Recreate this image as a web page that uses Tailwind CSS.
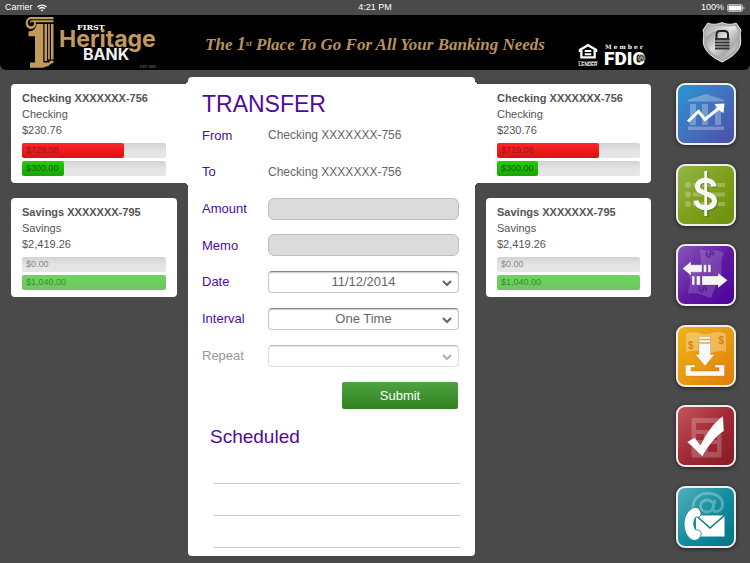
<!DOCTYPE html>
<html lang="en">
<head>
<meta charset="utf-8">
<meta name="viewport" content="width=device-width, initial-scale=1">
<title>First Heritage Bank - Transfer</title>
<script src="https://cdn.jsdelivr.net/npm/@tailwindcss/browser@4"></script>
</head>
<body class="min-h-screen bg-[#4a4a4a] font-['Liberation_Sans',Arial,sans-serif] text-[#555]">

<!-- Status bar -->
<div class="grid h-[15px] grid-cols-3 items-center px-[5px] text-[9px] leading-[15px] font-medium text-white">
  <div class="flex items-center gap-1">
    <span>Carrier</span>
    <svg class="h-2 w-[10px]" viewBox="0 0 20 16" fill="none" stroke="#fff" stroke-width="2.6" aria-hidden="true"><path d="M1 6C6 1 14 1 19 6M4.500 9.500C8 6.300 12 6.300 15.500 9.500"/><path d="M7.200 12C9 10.500 11 10.500 12.800 12L10 15Z" fill="#fff" stroke="none"/></svg>
  </div>
  <div class="text-center">4:21 PM</div>
  <div class="flex items-center justify-end gap-[3px]">
    <span>100%</span>
    <svg class="h-2 w-[18px]" viewBox="0 0 18 8" aria-hidden="true"><rect x=".5" y=".5" width="15" height="7" rx="1.500" fill="none" stroke="#ddd" stroke-width=".7"/><rect x="1.500" y="1.500" width="13" height="5" rx=".6" fill="#fff"/><path d="M16.500 2.500c1.300.4 1.300 2.600 0 3z" fill="#ddd"/></svg>
  </div>
</div>

<!-- Brand header -->
<header class="flex h-[55px] items-start rounded-b-md bg-black pr-2 pl-[24px]">
  <svg class="h-[55px] w-[148px] shrink-0" viewBox="24 15 148 55" role="img" aria-label="First Heritage Bank">
    <g fill="#c29a5b">
      <path d="M31 17H53.500V19.300H31.500C28.500 19.300 27.800 21 27.800 22.800C27.800 25 29.300 26.300 31 26.300C33 26.300 34 25 34 23.600C34 22.300 33 21.700 32 21.700C31 21.700 30.500 22.500 30.800 23.400C29.500 22.800 29.800 20.300 32.300 20.300H53.500V22.300H35.500C37 25 35 29 31 29C28 29 25.700 26.500 25.700 23C25.700 19.500 28 17 31 17Z"/>
      <path d="M36.500 24H43.300V62.500H49.500V60.800H53.500V63C51 63.200 50 64.500 49 65.500C47.500 67 45.500 66 43 67.800H30V62.500H35V36.200H28.500V31.500C33 31.500 36.500 28.500 36.500 24Z"/>
      <path d="M44.500 24H47V61H44.500ZM48.100 24H49.800V59.500H48.100ZM51 24H53.500V59.500H51Z"/>
    </g>
    <text x="77" y="30" font-family="'DejaVu Serif',serif" font-weight="bold" font-size="8" fill="#fff">FIRST</text>
    <text x="59" y="47" font-family="Inter,'Open Sans',sans-serif" font-weight="700" font-size="23" fill="#c29a5b">Heritage</text>
    <text x="83" y="60" font-family="Inter,'Open Sans',sans-serif" font-weight="700" font-size="16" fill="#eee">BANK</text>
    <text x="140" y="68" font-family="'Liberation Serif',serif" font-size="4" fill="#a98750">EST 1882</text>
  </svg>
  <p class="flex-1 pt-[19px] text-center font-['Liberation_Serif',Georgia,serif] text-[17px] leading-[20px] font-bold whitespace-nowrap text-[#ba935b] italic">The <span class="text-[18px]">1</span><sup class="text-[9px]">st</sup> Place To Go For All Your Banking Needs</p>
  <div class="flex shrink-0 items-start gap-[6px]">
    <svg class="mt-7 h-6 w-5" viewBox="0 0 20 24" role="img" aria-label="Equal Housing Lender">
      <path d="M10 .8L.7 6.200V9H2.200V15.500H17.800V9H19.300V6.200ZM10 3.600L15.500 6.700V13.200H4.500V6.700Z" fill="#fff" fill-rule="evenodd"/>
      <path d="M6.700 7h6.600v2H6.700zM6.700 10.200h6.600v2H6.700z" fill="#fff"/>
      <text x="10" y="18.800" text-anchor="middle" font-family="'Liberation Sans',sans-serif" font-size="2.400" font-weight="bold" fill="#ddd">EQUAL HOUSING</text>
      <text x="10" y="23.300" text-anchor="middle" font-family="'Liberation Sans',sans-serif" font-size="4.600" font-weight="bold" fill="#fff">LENDER</text>
    </svg>
    <svg class="mt-7 h-6 w-[44px]" viewBox="0 0 44 24" role="img" aria-label="Member FDIC">
      <text x="1" y="5.500" font-family="'DejaVu Serif',serif" font-weight="bold" font-size="6" letter-spacing="2" fill="#fff">Member</text>
      <text x="0" y="22" font-family="Roboto,'Liberation Sans',sans-serif" font-weight="900" font-size="19" fill="#fff">FDIC</text>
      <circle cx="37.500" cy="15" r="3.500" fill="#555" stroke="#ccc" stroke-width="1" stroke-dasharray="1 .5"/>
      <path d="M35.500 16.500L37.500 13.500L39.500 16.500" fill="none" stroke="#ccc" stroke-width=".8"/>
    </svg>
    <button type="button" class="mt-[6px] ml-12 h-[42px] w-[40px]" aria-label="Log out">
      <svg class="h-full w-full" viewBox="0 0 40 42" aria-hidden="true">
        <defs><linearGradient id="steel" x1="0" y1="0" x2="1" y2="1"><stop offset="0" stop-color="#777"/><stop offset=".45" stop-color="#ddd"/><stop offset=".7" stop-color="#aaa"/><stop offset="1" stop-color="#eee"/></linearGradient></defs>
        <path d="M6 2C10 4 16 3.500 20 1.500C24 3.500 30 4 34 2L39 9C37 13 39.500 17 38.500 23C36.500 32 28 37 20 41C12 37 3.500 32 1.500 23C.5 17 3 13 1 9Z" fill="#aaa" stroke="#e8e8e8" stroke-width="1"/>
        <path d="M7 5C12 6 17 6 20 4.500C23 6 28 6 33 5L36 9.500C34.500 13 36.500 18 35.500 22C34 30 27 34 20 38C13 34 6 30 4.500 22C3.500 18 5.500 13 4 9.500Z" fill="url(#steel)"/>
        <path d="M4 16C13 8 23 7 35 9L33 5H7L4 9Z" fill="#fff" opacity=".35"/>
        <path d="M14.500 17V13.500Q14.500 10 18 10H22.500Q26 10 26 13.500V17" fill="none" stroke="#222" stroke-width="2"/>
        <path d="M13 17H27.500V19.500H13ZM13 20.500H27.500V22.500H13ZM13 23.500H27.500V25.500H13ZM13 26.500H27.500V28.500H13Z" fill="#333"/>
      </svg>
    </button>
  </div>
</header>

<main class="flex items-stretch pt-[7px] pr-[14px] pb-[7px] pl-[11px]">

  <!-- Source accounts -->
  <section class="flex w-[177px] shrink-0 flex-col gap-[15px] pt-[7px]" aria-label="From accounts">
    <article class="relative rounded-l bg-white pt-[6px] pr-[22px] pb-[7px] pl-[11px] text-[11px] leading-[16px] before:absolute before:-top-1 before:right-0 before:size-1 before:bg-[radial-gradient(circle_at_0_0,transparent_4px,white_4px)] after:absolute after:right-0 after:-bottom-1 after:size-1 after:bg-[radial-gradient(circle_at_0_100%,transparent_4px,white_4px)]">
      <h2 class="font-bold whitespace-nowrap">Checking XXXXXXX-756</h2>
      <p>Checking</p>
      <p>$230.76</p>
      <div class="mt-[5px] flex flex-col gap-[3px] text-[9px] leading-[15px]">
        <div class="h-[15px] rounded-xs bg-linear-to-b from-[#d2d2d2] via-[#e4e4e4] to-[#e6e6e6]"><div class="h-full rounded-xs bg-linear-to-b from-[#ff2525] to-[#dc1010] pl-1 text-[#8d1b1b]" style="width:71%">$729.08</div></div>
        <div class="h-[15px] rounded-xs bg-linear-to-b from-[#d2d2d2] via-[#e4e4e4] to-[#e6e6e6]"><div class="h-full rounded-xs bg-linear-to-b from-[#27cc08] to-[#18a500] pl-1 text-[#155c0c]" style="width:29%">$300.00</div></div>
      </div>
    </article>
    <article class="mr-[11px] rounded bg-white px-[11px] pt-[6px] pb-[7px] text-[11px] leading-[16px]">
      <h2 class="font-bold whitespace-nowrap">Savings XXXXXXX-795</h2>
      <p>Savings</p>
      <p>$2,419.26</p>
      <div class="mt-[5px] flex flex-col gap-[3px] text-[9px] leading-[15px]">
        <div class="h-[15px] rounded-xs bg-linear-to-b from-[#d2d2d2] via-[#e4e4e4] to-[#e6e6e6] pl-1 text-[#888]">$0.00</div>
        <div class="h-[15px] rounded-xs bg-linear-to-b from-[#6ad75a] to-[#6fc460] pl-1 text-[#40883a]">$1,040.00</div>
      </div>
    </article>
  </section>

  <!-- Transfer form -->
  <section class="min-w-0 flex-1 rounded bg-white pb-2">
    <form class="pt-[14px] pr-4 pl-[14px]">
      <h1 class="text-[23px] leading-[26px] text-[#510a9d]">TRANSFER</h1>
      <div class="grid h-[257px] auto-rows-fr grid-cols-[66px_1fr] items-center text-[13px] text-[#510a9d]">
        <span>From</span><output class="text-[12px] text-[#666]">Checking XXXXXXX-756</output>
        <span>To</span><output class="text-[12px] text-[#666]">Checking XXXXXXX-756</output>
        <label for="amount">Amount</label>
        <input id="amount" type="text" class="h-[22px] w-full rounded-md border border-[#bdbdbd] bg-[#dbdbdb] px-2 text-[#555]">
        <label for="memo">Memo</label>
        <input id="memo" type="text" class="h-[22px] w-full rounded-md border border-[#bdbdbd] bg-[#dbdbdb] px-2 text-[#555]">
        <label for="date">Date</label>
        <div class="relative flex">
          <select id="date" class="h-[22px] w-full appearance-none rounded border border-[#c8c8c8] border-t-[#888] bg-white text-center text-[13px] text-[#666] shadow-[inset_0_1px_1px_#ccc]"><option>11/12/2014</option></select>
          <svg class="pointer-events-none absolute top-[9px] right-[7px] h-[7px] w-[10px]" viewBox="0 0 10 7" fill="none" stroke="#666" stroke-width="2.200" aria-hidden="true"><path d="M1 1L5 5L9 1"/></svg>
        </div>
        <label for="interval">Interval</label>
        <div class="relative flex">
          <select id="interval" class="h-[22px] w-full appearance-none rounded border border-[#c8c8c8] border-t-[#888] bg-white text-center text-[13px] text-[#666] shadow-[inset_0_1px_1px_#ccc]"><option>One Time</option></select>
          <svg class="pointer-events-none absolute top-[9px] right-[7px] h-[7px] w-[10px]" viewBox="0 0 10 7" fill="none" stroke="#666" stroke-width="2.200" aria-hidden="true"><path d="M1 1L5 5L9 1"/></svg>
        </div>
        <label for="repeat" class="text-[#999]">Repeat</label>
        <div class="relative flex">
          <select id="repeat" disabled class="h-[22px] w-full appearance-none rounded border border-[#dedede] border-t-[#bbb] bg-white text-center text-[13px] text-[#999] opacity-100 shadow-[inset_0_1px_1px_#e5e5e5]"><option></option></select>
          <svg class="pointer-events-none absolute top-[9px] right-[7px] h-[7px] w-[10px]" viewBox="0 0 10 7" fill="none" stroke="#b0b0b0" stroke-width="2.200" aria-hidden="true"><path d="M1 1L5 5L9 1"/></svg>
        </div>
      </div>
      <div class="flex justify-end pt-2 pr-px">
        <button type="submit" class="h-[27px] w-[116px] rounded-xs bg-linear-to-b from-[#4ea340] to-[#33811f] text-[13px] text-white">Submit</button>
      </div>
    </form>
    <h2 class="mt-[16px] pl-[22px] text-[19px] leading-[24px] text-[#510a9d]">Scheduled</h2>
    <ul class="mr-[15px] ml-[25px] pt-[3px]">
      <li class="h-8 border-b border-[#ccc]"></li>
      <li class="h-8 border-b border-[#ccc]"></li>
      <li class="h-8 border-b border-[#ccc]"></li>
    </ul>
  </section>

  <!-- Destination accounts -->
  <section class="flex w-[176px] shrink-0 flex-col gap-[15px] pt-[7px]" aria-label="To accounts">
    <article class="relative rounded-r bg-white pt-[6px] pr-[11px] pb-[7px] pl-[22px] text-[11px] leading-[16px] before:absolute before:-top-1 before:left-0 before:size-1 before:bg-[radial-gradient(circle_at_100%_0,transparent_4px,white_4px)] after:absolute after:-bottom-1 after:left-0 after:size-1 after:bg-[radial-gradient(circle_at_100%_100%,transparent_4px,white_4px)]">
      <h2 class="font-bold whitespace-nowrap">Checking XXXXXXX-756</h2>
      <p>Checking</p>
      <p>$230.76</p>
      <div class="mt-[5px] flex flex-col gap-[3px] text-[9px] leading-[15px]">
        <div class="h-[15px] rounded-xs bg-linear-to-b from-[#d2d2d2] via-[#e4e4e4] to-[#e6e6e6]"><div class="h-full rounded-xs bg-linear-to-b from-[#ff2525] to-[#dc1010] pl-1 text-[#8d1b1b]" style="width:71%">$729.08</div></div>
        <div class="h-[15px] rounded-xs bg-linear-to-b from-[#d2d2d2] via-[#e4e4e4] to-[#e6e6e6]"><div class="h-full rounded-xs bg-linear-to-b from-[#27cc08] to-[#18a500] pl-1 text-[#155c0c]" style="width:29%">$300.00</div></div>
      </div>
    </article>
    <article class="ml-[11px] rounded bg-white px-[11px] pt-[6px] pb-[7px] text-[11px] leading-[16px]">
      <h2 class="font-bold whitespace-nowrap">Savings XXXXXXX-795</h2>
      <p>Savings</p>
      <p>$2,419.26</p>
      <div class="mt-[5px] flex flex-col gap-[3px] text-[9px] leading-[15px]">
        <div class="h-[15px] rounded-xs bg-linear-to-b from-[#d2d2d2] via-[#e4e4e4] to-[#e6e6e6] pl-1 text-[#888]">$0.00</div>
        <div class="h-[15px] rounded-xs bg-linear-to-b from-[#6ad75a] to-[#6fc460] pl-1 text-[#40883a]">$1,040.00</div>
      </div>
    </article>
  </section>

  <!-- App navigation -->
  <nav class="ml-[25px] flex w-[60px] shrink-0 flex-col justify-between pt-[6px] pb-2" aria-label="Main">
    <a href="#accounts" aria-label="Accounts" class="block h-[62px] overflow-hidden rounded-[9px] border-2 border-[#eee] bg-linear-to-br from-[#2594d2] to-[#4a4ea8] shadow-[0_1px_4px_#222]">
      <svg class="-m-[2px] h-[62px] w-[60px]" viewBox="0 0 60 62" aria-hidden="true">
        <path d="M11.500 17L30 11L48 17V18.500H11.500ZM14 21H20V42H14ZM26 21H32V42H26ZM39 21H45V42H39ZM12 43.500H48V47H12Z" fill="#fff" opacity=".28"/>
        <path d="M12 38.500L22.500 28.500L29 36.500L45 23.500" fill="none" stroke="#fff" stroke-width="3"/>
        <path d="M38.500 21L48.500 20.500L47.500 30L44 28L41 24Z" fill="#fff"/>
      </svg>
    </a>
    <a href="#payments" aria-label="Payments" class="block h-[62px] overflow-hidden rounded-[9px] border-2 border-[#eee] bg-linear-to-br from-[#91b646] via-[#7fa01b] to-[#6d8f0c] shadow-[0_1px_4px_#222]">
      <svg class="-m-[2px] h-[62px] w-[60px]" viewBox="0 0 60 62" aria-hidden="true">
        <g fill="#fff" opacity=".25"><circle cx="12" cy="21" r="3"/><circle cx="12" cy="30.500" r="3"/><circle cx="12" cy="40" r="3"/><path d="M17 19H49V23H17ZM17 28.500H49V32.500H17ZM17 38H49V42H17Z"/></g>
        <g fill="none" stroke="#4c6410" opacity=".5" transform="translate(1 1)"><path d="M38 22.500C37 14 21.500 14 21.500 22.500C21.500 31 38.500 28 38.500 37C38.500 46 21 46 20 36.500" stroke-width="5.500"/><path d="M30 7V52" stroke-width="3"/></g>
        <g fill="none" stroke="#f8f8f8"><path d="M38 22.500C37 14 21.500 14 21.500 22.500C21.500 31 38.500 28 38.500 37C38.500 46 21 46 20 36.500" stroke-width="5"/><path d="M29.700 7V52" stroke-width="2.800"/></g>
      </svg>
    </a>
    <a href="#transfer" aria-label="Transfer" aria-current="page" class="block h-[62px] overflow-hidden rounded-[9px] border-2 border-[#eee] bg-linear-to-br from-[#8b54bb] via-[#6019a0] to-[#4c009b] shadow-[0_1px_4px_#222]">
      <svg class="-m-[2px] h-[62px] w-[60px]" viewBox="0 0 60 62" aria-hidden="true">
        <path d="M24 5C32 9 40 4 48 9C42 20 49 31 43 38C39 43 37 48 35 54C27 52 20 47 12 50C12 43 17 37 12 31L25 21Z" fill="#fff" opacity=".16"/>
        <g fill="#42118a" font-family="'Liberation Sans',sans-serif" font-size="12" opacity=".8"><text transform="translate(29 8) rotate(75)">$</text><text transform="translate(22 43) rotate(75)">$</text></g>
        <g fill="#f5f5f5" stroke="#3a1468" stroke-opacity=".35" stroke-width=".6"><path d="M6.500 24.500L15 17.500V20.800H26V28.200H15V31.500ZM27.500 20.800H30.500V28.200H27.500ZM32 20.800H34.800V28.200H32Z"/><path d="M51.500 36.300L42 29V32H26V41H42V44ZM16 32H18.700V41H16ZM20.500 32H24.200V41H20.500Z"/></g>
      </svg>
    </a>
    <a href="#deposit" aria-label="Deposit" class="block h-[62px] overflow-hidden rounded-[9px] border-2 border-[#eee] bg-linear-to-br from-[#edb21c] via-[#e89a10] to-[#df7d0a] shadow-[0_1px_4px_#222]">
      <svg class="-m-[2px] h-[62px] w-[60px]" viewBox="0 0 60 62" aria-hidden="true">
        <path d="M10 9C19 4 26 11 33 9C39 7 45 6 50 9V27C43 24 37 29 31 28C24 27 17 23 10 28Z" fill="#fff" opacity=".3"/>
        <g fill="#d9820b" font-family="'Liberation Sans',sans-serif" font-weight="bold" font-size="10"><text x="12" y="24">$</text><text x="42.500" y="19">$</text></g>
        <g fill="#f8f8f8" stroke="#a8620a" stroke-opacity=".4" stroke-width=".6"><path d="M23 11.500H34.500V14H23ZM23 15H34.500V17.500H23ZM23 18.500H34.500V29.500H38.500L29 41L19.500 29.500H23Z"/><path d="M9.500 40H19V42.500H15V46H43V42.500H39V40H48.500V51H9.500Z"/></g>
      </svg>
    </a>
    <a href="#approvals" aria-label="Approvals" class="block h-[62px] overflow-hidden rounded-[9px] border-2 border-[#eee] bg-linear-to-br from-[#c4545e] via-[#a12a35] to-[#861a23] shadow-[0_1px_4px_#222]">
      <svg class="-m-[2px] h-[62px] w-[60px]" viewBox="0 0 60 62" aria-hidden="true">
        <path d="M17 13H44Q45.500 13 45.500 14.500V51Q45.500 52.500 44 52.500H17Q15.500 52.500 15.500 51V14.500Q15.500 13 17 13ZM20 18V25H41V18ZM20 29V35H28V29ZM32 29V35H41V29ZM20 39V47H28V39ZM32 39V47H41V39Z" fill="#fff" fill-rule="evenodd" opacity=".22"/>
        <path d="M11 37L18.500 32.500L24.500 40C30 29 37 18 47 11L48 26C40 31 32 41 26.500 51.500C21 47 16 41 11 37Z" fill="#fff" stroke="#5d1119" stroke-opacity=".4" stroke-width=".7"/>
      </svg>
    </a>
    <a href="#contact" aria-label="Contact us" class="block h-[62px] overflow-hidden rounded-[9px] border-2 border-[#eee] bg-linear-to-br from-[#4eafbb] via-[#128e9e] to-[#007486] shadow-[0_1px_4px_#222]">
      <svg class="-m-[2px] h-[62px] w-[60px]" viewBox="0 0 60 62" aria-hidden="true">
        <g fill="none" stroke="#fff" stroke-width="2.800" opacity=".28"><path d="M39 30C31 35 16 31 17 20C18 10 26 7 33 7.500C42 8 47 13 46.500 19C46 26 36 28 37 22L39 14"/><ellipse cx="31" cy="20" rx="6.500" ry="6"/></g>
        <path d="M20 29.500H48.500V50.500H20Z" fill="#fff"/>
        <path d="M20 29.500L34 42L48.500 29.500" fill="none" stroke="#087889" stroke-width="1.600"/>
        <path d="M18 21.500C21 20.500 24 23 25 27C25.500 29.500 23 32 20 31C17 34 17 41 20 44C23 43 26 46 25 49C24 53 20 55.500 16.500 54C5 49 5 26 18 21.500Z" fill="#fff" stroke="#087889" stroke-width=".8"/>
      </svg>
    </a>
  </nav>
</main>
</body>
</html>
